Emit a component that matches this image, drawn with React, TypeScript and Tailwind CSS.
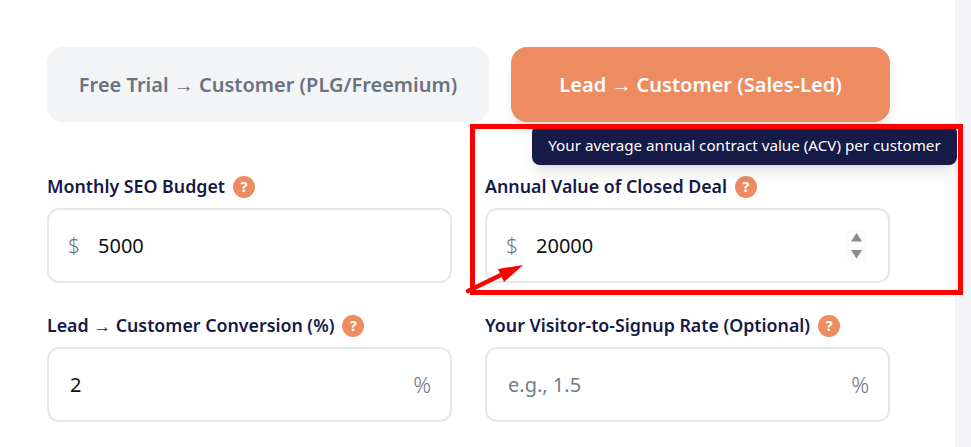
const HelpBadge = () => (
  <span className="flex h-[22px] w-[22px] shrink-0 items-center justify-center rounded-full bg-[#ed8c61] text-[14px] font-extrabold leading-none text-white">
    ?
  </span>
);

type FieldProps = {
  label: string;
  value?: string;
  placeholder?: string;
  prefix?: string;
  suffix?: string;
  spinner?: boolean;
};

const Field = ({ label, value, placeholder, prefix, suffix, spinner }: FieldProps) => (
  <div className="flex flex-col">
    <div className="flex h-[22px] items-center gap-2">
      <span className="whitespace-nowrap text-[17.8px] font-semibold leading-none text-[#151a47]">{label}</span>
      <HelpBadge />
    </div>
    <div className="mt-[10px] flex h-[75px] items-center rounded-xl border-2 border-[#e5e7eb] bg-white pl-[21px] pr-[19px] text-[20px]">
      {prefix && <span className="-ml-[2px] w-[30px] text-[21px] font-light text-[#6b7280]">{prefix}</span>}
      {value ? (
        <span className="text-[#111111]">{value}</span>
      ) : (
        <span className="text-[#757a85]">{placeholder}</span>
      )}
      {suffix && <span className="ml-auto text-[22px] font-light text-[#6b7280]">{suffix}</span>}
      {spinner && (
        <span className="ml-auto mr-[3px] flex h-8 w-[19px] items-center justify-center bg-[#fbfbfb]">
          <svg width="13" height="27" viewBox="0 0 13 27">
            <path d="M6.5 1 12 9.5H1Z" fill="#8a8a8a" />
            <path d="M1 18h11L6.5 26.5Z" fill="#8a8a8a" />
          </svg>
        </span>
      )}
    </div>
  </div>
);

export default function App() {
  return (
    <div className="relative flex h-[447px] w-[971px] overflow-hidden bg-white font-['Noto_Sans',sans-serif]">
      <main className="w-[955px] pl-[47px] pr-[65px] pt-[47px]">
        {/* Funnel type toggle */}
        <div className="flex gap-[22px]">
          <button className="h-[75px] w-[442px] rounded-2xl bg-[#f3f4f6] text-[20px] font-semibold text-[#6b7280]">
            Free Trial → Customer (PLG/Freemium)
          </button>
          <button className="h-[75px] w-[379px] rounded-2xl bg-[#ed8c61] text-[20px] font-semibold text-white shadow-lg shadow-black/10">
            Lead → Customer (Sales-Led)
          </button>
        </div>

        <div className="mt-[54px] grid grid-cols-2 gap-x-[33px] gap-y-[32px]">
          <Field label="Monthly SEO Budget" prefix="$" value="5000" />
          <Field label="Annual Value of Closed Deal" prefix="$" value="20000" spinner />
          <Field label="Lead → Customer Conversion (%)" value="2" suffix="%" />
          <Field label="Your Visitor-to-Signup Rate (Optional)" placeholder="e.g., 1.5" suffix="%" />
        </div>
      </main>
      <aside className="w-4 bg-[#f4f4f6]" />

      {/* Tooltip */}
      <div className="absolute left-[532px] top-[125px] flex h-10 w-[425px] items-center justify-center rounded-lg bg-[#151a47] text-[15.2px] text-white shadow-lg">
        Your average annual contract value (ACV) per customer
      </div>

      {/* Red annotation */}
      <div className="pointer-events-none absolute left-[470px] top-[124px] h-[171px] w-[493px] border-[5px] border-[#ff0000]" />
      <svg className="pointer-events-none absolute left-[460px] top-[255px]" width="70" height="45" viewBox="0 0 70 45">
        <path d="M8 36 43 19" stroke="#ff0000" strokeWidth="4.5" strokeLinecap="round" />
        <path d="M63 10 38 14 44 27Z" fill="#ff0000" />
      </svg>
    </div>
  );
}
